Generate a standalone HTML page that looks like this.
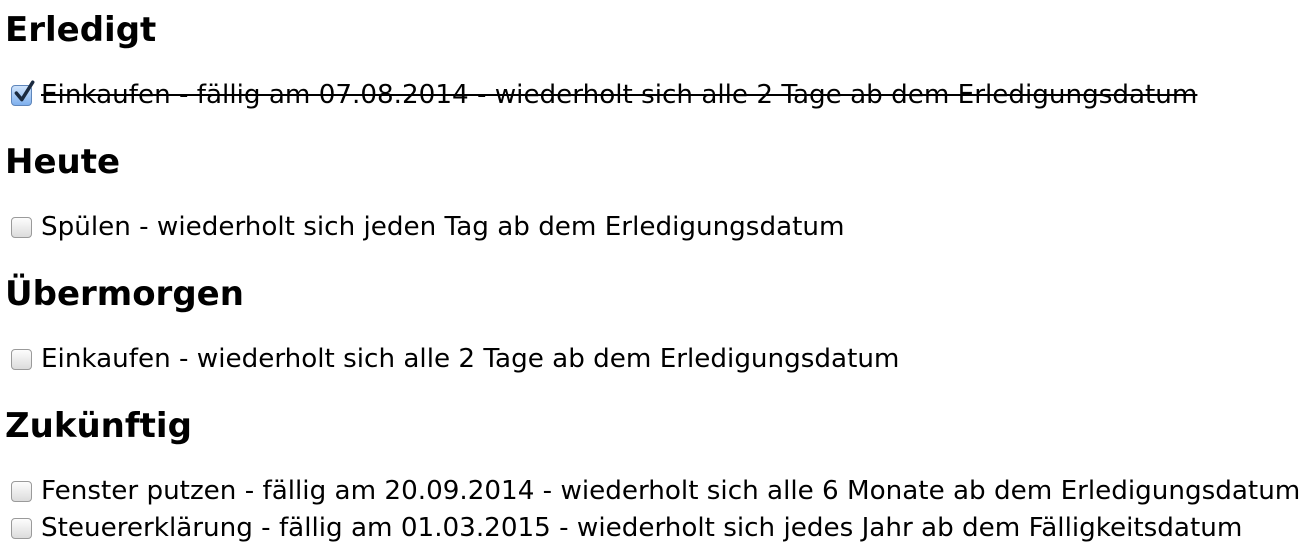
<!DOCTYPE html>
<html><head><meta charset="utf-8"><style>
body{margin:0;width:1306px;height:554px;background:#fff;overflow:hidden;font-family:"DejaVu Sans","Liberation Sans",sans-serif;color:#000}
.h{position:absolute;left:5px;font-size:34px;font-weight:bold;line-height:40px;white-space:nowrap}
.i{position:absolute;left:41px;font-size:26.2px;line-height:40px;white-space:nowrap}
.cb{position:absolute;left:11px;width:19px;height:19px;border:1px solid #9a9a9a;border-radius:4px;background:linear-gradient(#fdfdfd,#dcdcdc);box-sizing:content-box}
.cb.c{background:linear-gradient(#cfe3fb,#7fb0ee);border-color:#5f86bb}
.s{text-decoration:line-through;text-decoration-thickness:2px}
</style></head><body>
<div class="h" style="top:10px">Erledigt</div>
<div class="cb c" style="top:85px"><svg width="24" height="24" style="position:absolute;left:0;top:-6px" viewBox="0 0 22 22"><path d="M4 12 L9 18 L19 2" fill="none" stroke="#1a2a3f" stroke-width="3.2" stroke-linecap="round" stroke-linejoin="round"/></svg></div>
<div class="i s" style="top:75px">Einkaufen - fällig am 07.08.2014 - wiederholt sich alle 2 Tage ab dem Erledigungsdatum</div>
<div class="h" style="top:142px">Heute</div>
<div class="cb" style="top:217px"></div>
<div class="i" style="top:207px">Spülen - wiederholt sich jeden Tag ab dem Erledigungsdatum</div>
<div class="h" style="top:274px">Übermorgen</div>
<div class="cb" style="top:349px"></div>
<div class="i" style="top:339px">Einkaufen - wiederholt sich alle 2 Tage ab dem Erledigungsdatum</div>
<div class="h" style="top:406px">Zukünftig</div>
<div class="cb" style="top:481px"></div>
<div class="i" style="top:471px">Fenster putzen - fällig am 20.09.2014 - wiederholt sich alle 6 Monate ab dem Erledigungsdatum</div>
<div class="cb" style="top:518px"></div>
<div class="i" style="top:508px">Steuererklärung - fällig am 01.03.2015 - wiederholt sich jedes Jahr ab dem Fälligkeitsdatum</div>
</body></html>
